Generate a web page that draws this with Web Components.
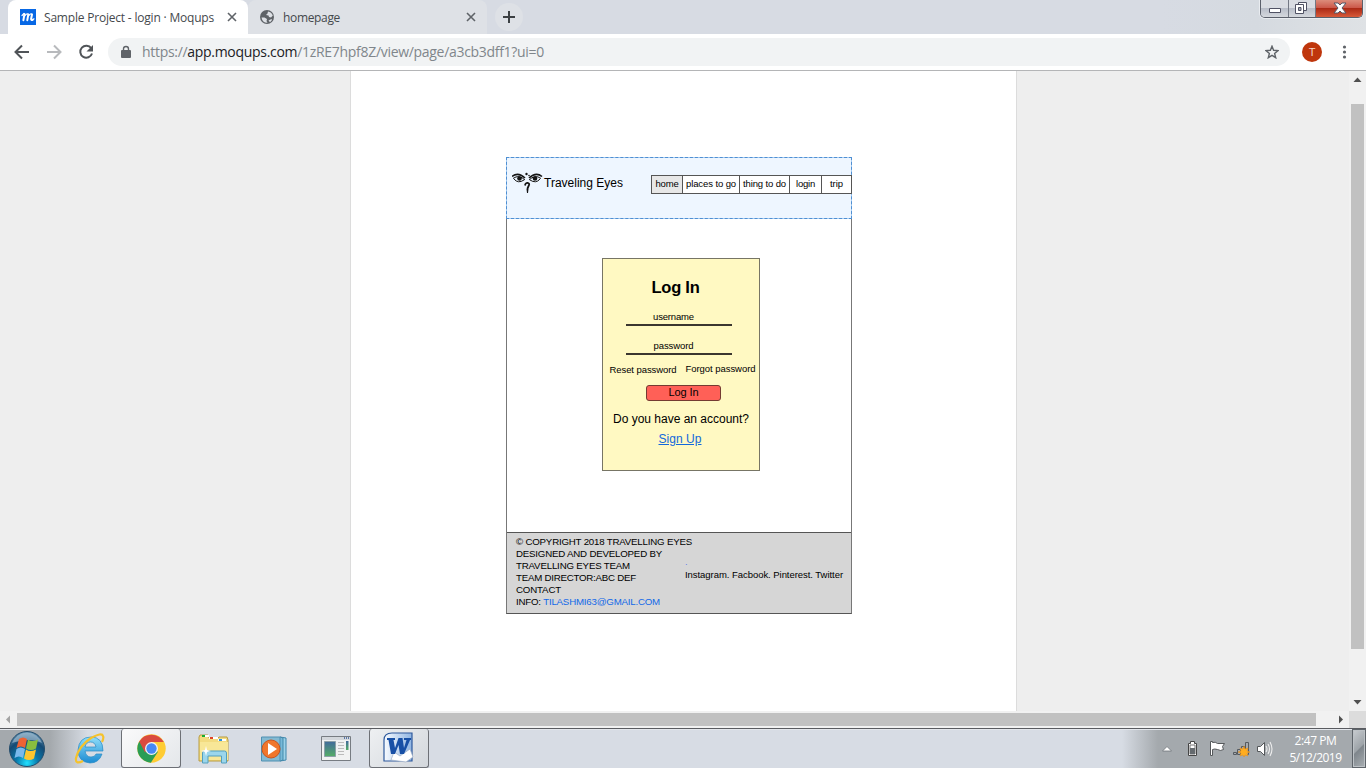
<!DOCTYPE html>
<html lang="en">
<head>
<meta charset="utf-8">
<title>Sample Project - login · Moqups</title>
<style>
html,body{margin:0;width:1366px;height:768px;overflow:hidden;background:#eee}
body{font-family:"Liberation Sans",Arial,sans-serif}
</style>
</head>
<body>
<desktop-screen></desktop-screen>
<script>
function element(name, css, html) {
  customElements.define(name, class extends HTMLElement {
    constructor() {
      super();
      this.attachShadow({mode: 'open'}).innerHTML = '<style>*{box-sizing:border-box}' + css + '</style>' + html;
    }
  });
}

element('desktop-screen', `:host{display:flex;flex-direction:column;width:1366px;height:768px}
.view{display:flex;flex:none;height:640px;background:#eee}
.canvas{flex:1;display:flex;padding-left:350px}
.page{width:667px;height:640px;background:#fff;border:1px solid #dcdcdc;border-width:0 1px;padding:86px 0 0 155px}`,
`<tab-strip></tab-strip><browser-toolbar></browser-toolbar>
<div class="view"><div class="canvas"><div class="page"><mock-page></mock-page></div></div><vertical-scroll></vertical-scroll></div>
<horizontal-scroll></horizontal-scroll><task-bar></task-bar>`);

element('tab-strip', `:host{display:flex;height:34px;flex:none;background:linear-gradient(90deg,#d7dbe3 0,#d7dbe3 85%,#d5dae0 92%,#dfe2e5 100%);padding-left:8px;font:12px "Open Sans","Noto Sans",sans-serif;color:#45494d}
.tab{display:flex;align-items:center;height:34px;width:240px;padding:0 11px 0 12px;border-radius:8px 8px 0 0}
.active{background:#fff}.other{background:#dee1e6;padding-left:11px;width:239px}
.tab svg{flex:none}.tab fit-text{margin:0 0 0 8px}.x{margin-left:auto}
.plus{width:28px;height:28px;border-radius:50%;background:#dee1e6;margin:3px 0 0 8px;flex:none}
.win{display:flex;height:18px;margin:0 3px 0 auto;border:1px solid #5b606b;border-top:0;border-radius:0 0 5px 5px;overflow:hidden;box-shadow:0 0 0 1px #e9ecf0}
.win div{background:linear-gradient(#d9dce2 0 45%,#b9bec9 50%,#d5d8dd);border-right:1px solid #737884;height:17px}
.win .c{border:0;background:linear-gradient(#dc8c7b 0,#cc594a 45%,#ac2a16 50%,#d85a39)}
.win svg{display:block}`,
`<div class="tab active"><svg width="16" height="16"><path fill="#0868e5" d="M0 0h16v16H0z"/><g fill="none" stroke="#fff" stroke-linecap="round" stroke-linejoin="round"><path d="M2 6.500 4 4.500" stroke-width="1.200"/><path d="M4.500 5 3.400 11.200M8.300 5.500 7.300 11.200M12 5.500l-.9 4.500q0 1.500 1.500.9" stroke-width="2"/><path d="M4.500 7Q7 4 8.300 5.200M8.300 7q2.500-3 3.700-1.800M12.300 11.200 14 9.800" stroke-width="1.200"/></g></svg><fit-text w="170">Sample Project - login · Moqups</fit-text><svg class="x" width="10" height="10"><path d="m1 1 8 8M9 1 1 9" stroke="#5f6368" stroke-width="1.6"/></svg></div>
<div class="tab other"><svg width="16" height="16"><circle cx="8" cy="8" r="7" fill="#5f6368"/><path fill="#dee1e6" d="M9 2.500q3.500.5 4.800 4L12 8.500 10 8 9.500 6.500 7 6l1.500-1.500zM2.500 8.500h3L8 10l-.5 2 1 1.800q-5 .2-6-5.300M9.500 11.500l3-1.500.5 1-2 2.200z"/></svg><fit-text w="57">homepage</fit-text><svg class="x" width="10" height="10"><path d="m1 1 8 8M9 1 1 9" stroke="#5f6368" stroke-width="1.6"/></svg></div>
<svg class="plus" viewBox="0 0 28 28"><path d="M14 8v12M8 14h12" stroke="#3c4043" stroke-width="2"/></svg>
<div class="win"><div><svg width="27" height="17"><path d="M8.500 8.500h11v4h-11z" fill="#fff" stroke="#505264"/></svg></div><div><svg width="26" height="17"><path d="M9.500 2.500h8v8h-8z" fill="#fff" stroke="#505264"/><path d="M6.500 4.500h8v9h-8z" fill="#fff" stroke="#505264"/><path d="M9.500 7.500h2.500v3H9.500z" fill="#a5aab6" stroke="#505264"/></svg></div><div class="c"><svg width="46" height="17"><path d="M18 3h4l2 2 2-2h4l-4 5 4 5h-4l-2-2-2 2h-4l4-5z" fill="#fff" stroke="#555868"/></svg></div></div>`);

element('browser-toolbar', `:host{display:flex;align-items:center;height:37px;flex:none;background:#fff;border-bottom:1px solid #b4b5b7;font:14px "Open Sans","Noto Sans",sans-serif}
.nav{display:flex;gap:16px;padding-left:14px}.nav svg{display:block}
.url{display:flex;align-items:center;height:28px;border-radius:14px;background:#f1f3f4;width:1182px;margin-left:14px;padding:0 11px 0 12px;color:#80868b}
.url fit-text{margin:-1px 0 0 10px}.site{color:#202124}.star{margin-left:auto}
.user{width:20px;height:20px;border-radius:50%;background:#bf360c;color:#f5d5ca;font:11px/20px "Liberation Sans",sans-serif;text-align:center;margin-left:12px}
.more{margin-left:20px}`,
`<div class="nav"><svg width="16" height="16"><path d="M15 8H2M8 1.500 1.500 8 8 14.500" fill="none" stroke="#505458" stroke-width="2"/></svg><svg width="16" height="16"><path d="M1 8h13M8 1.500 14.500 8 8 14.500" fill="none" stroke="#b8babd" stroke-width="2"/></svg><svg width="16" height="16"><path d="M13.200 4.200A6 6 0 1 0 14 9.500" fill="none" stroke="#505458" stroke-width="2"/><path d="M15 1v6.500H8.500z" fill="#505458"/></svg></div>
<div class="url"><svg width="12" height="14"><path d="M2 5h8q1 0 1 1v6q0 1-1 1H2q-1 0-1-1V6q0-1 1-1" fill="#5f6368"/><path d="M3.500 6V4a2.500 2.500 0 0 1 5 0v2" fill="none" stroke="#5f6368" stroke-width="1.400"/></svg><fit-text w="402">https://<span class="site">app.moqups.com</span>/1zRE7hpf8Z/view/page/a3cb3dff1?ui=0</fit-text><svg class="star" width="14" height="14"><path d="m7 1.200 1.600 4.100 4.400.3-3.400 2.800 1.100 4.300L7 10.300l-3.700 2.400 1.100-4.300L1 5.600l4.400-.3z" fill="none" stroke="#5f6368" stroke-width="1.400"/></svg></div><div class="user">T</div><svg class="more" width="5" height="16"><g fill="#5f6368"><circle cx="2.500" cy="3" r="1.600"/><circle cx="2.500" cy="8" r="1.600"/><circle cx="2.500" cy="13" r="1.600"/></g></svg>`);

element('vertical-scroll', `:host{display:flex;flex-direction:column;width:17px;height:640px;background:#f1f1f1}
svg{display:block}.t{width:13px;height:545px;background:#c1c1c1;margin:16px 2px 45px}`,
`<svg width="17" height="17"><path d="m4.500 11 4-4.500 4 4.500z" fill="#505050"/></svg><div class="t"></div><svg width="17" height="17"><path d="m4.500 6 4 4.500 4-4.500z" fill="#505050"/></svg>`);

element('horizontal-scroll', `:host{display:flex;height:17px;flex:none;background:#f1f1f1}
svg{display:block}.t{width:1299px;height:13px;background:#c1c1c1;margin:2px 16px 0 0}.corner{width:17px;background:#dcdcdc}`,
`<svg width="17" height="17"><path d="M10 4.500v8L6 8.500z" fill="#a3a3a3"/></svg><div class="t"></div><svg width="17" height="17"><path d="M7 4.500v8l4-4z" fill="#505050"/></svg><div class="corner"></div>`);

element('mock-page', `:host{display:flex;flex-direction:column;width:346px;height:457px;border:1px solid #777;border-bottom-color:#555;color:#000}
.body{height:314px;padding:39px 0 0 95px}`,
`<site-header></site-header><div class="body"><login-card></login-card></div><site-footer></site-footer>`);

element('site-header', `:host{display:flex;height:62px;flex:none;margin:-1px -1px 0;background:linear-gradient(#eef6ff,#eef6ff) padding-box,#a5cbf2 border-box;border:1px dashed #4f8fd2;padding:14px 0 0 5px}
.eyes{margin:0 1px 0 0;flex:none}.brand{font-size:12px;line-height:14px;margin-top:4px}
nav{display:flex;height:19px;margin:3px -1px 0 auto;border:1px solid #555;background:#fff;font-size:9.500px;line-height:15px}
nav div{border-right:1px solid #555;text-align:center}nav div:last-child{border:0}.on{background:#e7e7e7}`,
`<svg class="eyes" width="31" height="23"><g fill="none" stroke="#151515"><path d="M0 4.500Q6-.5 13 6" stroke-width="1.600"/><path d="M1 6.500Q7 2 13 8M2 7q4 5 10 1" /><path d="M30 4.500Q24-.5 17 6" stroke-width="1.600"/><path d="M29 6.500Q23 2 17 8M28 7q-4 5-10 1"/><path d="M13 13.500q.500-3 3-2.500c3 1-.500 3.500-.500 6" stroke-width="1.800"/></g><g fill="#151515"><circle cx="7.500" cy="6.500" r="2.300"/><circle cx="23" cy="6.500" r="2.300"/><circle cx="14.500" cy="2" r="1.200"/><circle cx="17" cy="3.500" r=".8"/><path d="M14.500 17h2l-.5 4h-1z"/></g></svg><fit-text class="brand" w="79">Traveling Eyes</fit-text>
<nav><div class="on" style="width:31px"><fit-text w="23">home</fit-text></div><div style="width:57px"><fit-text w="50">places to go</fit-text></div><div style="width:50px"><fit-text w="43">thing to do</fit-text></div><div style="width:32px"><fit-text w="19">login</fit-text></div><div style="width:29px"><fit-text w="13">trip</fit-text></div></nav>`);

element('login-card', `:host{display:flex;flex-direction:column;align-items:center;width:158px;height:213px;border:1px solid #777565;background:#fff9c2;font-size:9.500px;line-height:11px;padding:18px 0 0}
h1{font-size:16.500px;line-height:20px;margin:0 11px 0 0;height:34px}
.field{width:106px;height:15px;border-bottom:2px solid #3b372f;text-align:center;padding:0 11px 0 0;margin-right:4px}
.pw{margin-top:14px;margin-right:4px}
.links{display:flex;gap:9px;margin:8px 0 0 3px;height:22px}.links fit-text:first-child{margin-top:1px}
.btn{width:75px;height:16px;border:1px solid #743b32;border-radius:3px;background:#ff6057;font-size:11px;line-height:13px;text-align:center;margin-left:5px}
.ask{font-size:12px;line-height:14px;margin:11px 0 0 0}.up{font-size:12px;line-height:14px;color:#1268dc;margin:6px 2px 0 0;text-decoration:underline}`,
`<h1><fit-text w="48">Log In</fit-text></h1><div class="field"><fit-text w="41">username</fit-text></div><div class="field pw"><fit-text w="40">password</fit-text></div>
<div class="links"><fit-text w="67">Reset password</fit-text><fit-text w="70">Forgot password</fit-text></div><div class="btn"><fit-text w="30">Log In</fit-text></div><fit-text class="ask" w="136">Do you have an account?</fit-text><fit-text class="up" w="43">Sign Up</fit-text>`);

element('site-footer', `:host{display:flex;height:81px;flex:none;background:#d6d6d6;border-top:1px solid #555;font-size:9.700px;line-height:12px;padding:3px 8px 0 9px}
.left{display:flex;flex-direction:column;align-items:flex-start;width:169px}.mail{color:#1268e8}
.right{font-size:9.500px;line-height:11px;margin-top:22px}.dot{height:11px;color:#6480e8;line-height:8px}.right fit-text{display:block}`,
`<div class="left"><fit-text w="176">© COPYRIGHT 2018 TRAVELLING EYES</fit-text><fit-text w="146">DESIGNED AND DEVELOPED BY</fit-text><fit-text w="114">TRAVELLING EYES TEAM</fit-text><fit-text w="120">TEAM DIRECTOR:ABC DEF</fit-text><fit-text w="45">CONTACT</fit-text><fit-text w="144">INFO: <span class="mail">TILASHMI63@GMAIL.COM</span></fit-text></div><div class="right"><div class="dot">.</div><fit-text w="158">Instagram. Facbook. Pinterest. Twitter</fit-text></div>`);

element('tray-icons', `:host{display:flex;align-items:center}svg{display:block}`,
`<svg width="112" height="20"><path d="m.5 12 4.500-4.500L9.500 12z" fill="#fff" stroke="#6e7478" stroke-width=".8"/><path d="M26.500 4.500h2v-2h4v2h2v12h-8z" fill="#fff" stroke="#454545"/><path d="M28 6h5v9h-5z" fill="#fff" stroke="#777"/><path d="M28 9h5v6h-5z" fill="#656a6e"/><path d="M48.500 2.500h2v1q3-1 5 1h7l-2 3 1 3q-3 2-6 0-3-1-5 0v6h-2z" fill="#fff" stroke="#55585b"/><g fill="#a7aaad" stroke="#565b60"><path d="M71.500 13.500h3v2h-3zM75.500 10.500h3v5h-3zM79.500 7.500h3v8h-3zM83.500 3.500h3v12h-3z"/></g><path d="m82 7 1 3 3-1-1 3 3 1-3 1 1 3-3-1-1 2-1-2-3 1 1-3-3-1 3-1-1-3 3 1z" fill="#ffad1f" stroke="#e78b15" stroke-width=".5"/><path d="M95.500 7.500h3l4-4v13l-4-4h-3z" fill="#fff" stroke="#55585b"/><path d="M104 7q2 3 0 6m2-8q3 5 0 10m2-12q4 7 0 14" fill="none" stroke="#eee" stroke-width="1.100"/></svg>`);

element('task-bar', `:host{display:flex;height:40px;flex:none;border-top:1px solid #595b60;box-shadow:inset 0 1px #e4e7ec;background:linear-gradient(90deg,#a4a9ad 0,#a4a9ad 50px,#d7dce4 88px,#d7dce4 1122px,#a4a9ad 1158px);font:12px "Open Sans","Noto Sans",sans-serif;color:#fff}
svg{display:block;flex:none}
.apps{display:flex}.cell{width:62px;height:39px;display:flex;align-items:center;justify-content:center}
.start{width:59px;padding-right:5px}.run{width:60px;border:1px solid #6d7076;border-top:0;border-radius:3px;background:linear-gradient(135deg,#fafafb,#e4e7ea)}
.folder{width:64px;padding-left:2px}
.media{width:61px;padding-right:1px}.panel{width:63px;padding-right:4px}
.word{background:linear-gradient(135deg,#eef0f2,#d3d7dc)}.word svg{margin-left:-2px}
.tray{display:flex;align-items:center;margin-left:auto}
.clock{display:flex;flex-direction:column;align-items:center;line-height:17px;width:55px;margin:0 9px 0 14px}
.show{width:14px;height:39px;border:1px solid #5e646a;background:linear-gradient(135deg,#c8ccd0 0,#9da3a8 50%,#7e858b 52%,#a9afb3);box-shadow:inset 0 0 0 1px #bdc2c6}`,
`<div class="apps"><div class="cell start"><svg width="38" height="38" viewBox="0 0 38 38"><defs><radialGradient id="g" cx=".5" cy=".9" r=".9"><stop stop-color="#21e0ff"/><stop offset=".35" stop-color="#0878aa"/><stop offset=".7" stop-color="#154a74"/><stop offset="1" stop-color="#6595b5"/></radialGradient></defs><circle cx="19" cy="19" r="17.500" fill="url(#g)" stroke="#244d6c"/><path d="M4 13A16 16 0 0 1 34 13Q22 7 4 13" fill="#bad0df" opacity=".55"/><path d="M11 9q4-3 8 0l-2 9q-4-3-8.500 0z" fill="#ed6334"/><path d="M20 9.500q4 3 10 0l-2 9q-5 3-10 0z" fill="#88bd3e"/><path d="M8.500 19q4-3 8.500 0l-2 9q-4-3-8.500 0z" fill="#79b9ec"/><path d="M18 19.500q4 3 10 0l-2 9q-5 3-10 0z" fill="#fcc62f"/></svg></div>
<div class="cell"><svg width="32" height="32" viewBox="0 0 32 32"><defs><linearGradient id="e" x2="0" y2="1"><stop stop-color="#8fdefa"/><stop offset="1" stop-color="#1b8bd2"/></linearGradient></defs><path d="M29 18H11q1 6 6 6 4 0 5-3h6q-3 9-12 9Q4 29 4 17 5 4 17 4q12 0 12 14M11 14h11q-1-5-5.500-5T11 14" fill="url(#e)" stroke="#288bc4" stroke-width=".7"/><path d="M9 28Q1 32 2 25 5 13 17 5 28-1 29 3q1 2-1 6" fill="none" stroke="#f5c22b" stroke-width="2.200"/></svg></div>
<div class="cell run"><svg width="31" height="31" viewBox="0 0 48 48"><circle cx="24" cy="24" r="22" fill="#fc3"/><path d="M24 24 34 29 23 46A22 22 0 0 1 5 13z" fill="#299d55"/><path d="M5 13a22 22 0 0 1 38 1H24L14 30z" fill="#da4b3f"/><circle cx="24" cy="24" r="10" fill="#f2f3f4"/><circle cx="24" cy="24" r="8" fill="#4688f4"/></svg></div>
<div class="cell folder"><svg width="34" height="32" viewBox="0 0 34 32"><path d="M2 4 3 2h8l1 3h9l1-1h8l1 3v21H2z" fill="#f3dc80" stroke="#b89c43"/><path d="M5 2h7v2H5z" fill="#fff"/><path d="M5 2h3v2H5z" fill="#16ad31"/><path d="M12 4h9v2h-9z" fill="#fff"/><path d="M13 4h3v2h-3z" fill="#df4328"/><path d="M21 6h8v2h-8z" fill="#fff"/><path d="M22 6h3v2h-3z" fill="#2a92df"/><path d="M3 9h28v18H3z" fill="#f8e797"/><path d="M5.500 30V20q0-2 2-2h20q2 0 2 2v10h-5v-7H11v7z" fill="#9bd6ec" stroke="#539fbe"/><path d="m9 13 1 4 4 1-4 1-1 4-1-4-4-1 4-1z" fill="#fff"/></svg></div>
<div class="cell media"><svg width="30" height="28" viewBox="0 0 30 28"><path d="m20 2 6 1v22l-6 1" fill="#9dd2e9" stroke="#3e86ab"/><path d="m20 2 3 1v22l-3 1" fill="#77b9d8" stroke="#4489aa"/><path d="M1.500 2H20v24H1.500z" fill="#84bad2" stroke="#4e90b2"/><circle cx="11" cy="14" r="9" fill="#f0762b" stroke="#cc541b"/><path d="m8 8 9 6-9 6z" fill="#fff"/></svg></div>
<div class="cell panel"><svg width="32" height="27" viewBox="0 0 32 27"><defs><linearGradient id="p" x2="0" y2="1"><stop stop-color="#426b9b"/><stop offset="1" stop-color="#55ad66"/></linearGradient></defs><path d="M1.500 1.500h29v24h-29z" fill="#f1f2f2" stroke="#777c82"/><path d="M2 2h28v3H2z" fill="#d3d7dc"/><path d="M24 3h1m1 0h1m1 0h1" stroke="#335894" stroke-width="1.400"/><path d="M4.500 6.500h11v15h-11z" fill="url(#p)" stroke="#8da1a8"/><path d="M18 7.500h6m-6 3h6m-6 3h6m-6 3h6m-6 3h6" stroke="#bbb"/><path d="M26 6h2.500v9H26z" fill="url(#p)"/></svg></div>
<div class="cell run word"><svg width="34" height="34" viewBox="0 0 34 34"><defs><linearGradient id="w"><stop stop-color="#f8fbff"/><stop offset="1" stop-color="#90b5e2"/></linearGradient></defs><path d="M3 30V9q0-7 8-7h20v28z" fill="url(#w)" stroke="#2e599c" stroke-width="1.200"/><path d="m10 29 3-8 6 4 10-7 3 8-7 5z" fill="#fff" stroke="#9caec6" stroke-width=".7"/><path d="M6 7h8v2h-1.500l1.500 8 3.500-10h4l1.500 10 2.500-8H23V7h7v2h-1l-6 14h-4l-1.500-9L14 23h-4L7.500 9H6z" fill="#1850a6"/></svg></div></div>
<div class="tray"><tray-icons></tray-icons><div class="clock"><fit-text w="42">2:47 PM</fit-text><fit-text w="52">5/12/2019</fit-text></div><div class="show"></div></div>`);

customElements.define('fit-text', class extends HTMLElement {
  constructor() {
    super();
    this.attachShadow({mode: 'open'}).innerHTML = '<style>:host{display:inline-block;white-space:pre;flex:none}</style><span><slot></slot></span>';
  }
  connectedCallback() {
    const width = Number(this.getAttribute('w'));
    const natural = this.shadowRoot.querySelector('span').getBoundingClientRect().width;
    this.style.letterSpacing = (width - natural) / this.textContent.length + 'px';
    this.style.width = width + 'px';
  }
});
</script>
</body>
</html>
